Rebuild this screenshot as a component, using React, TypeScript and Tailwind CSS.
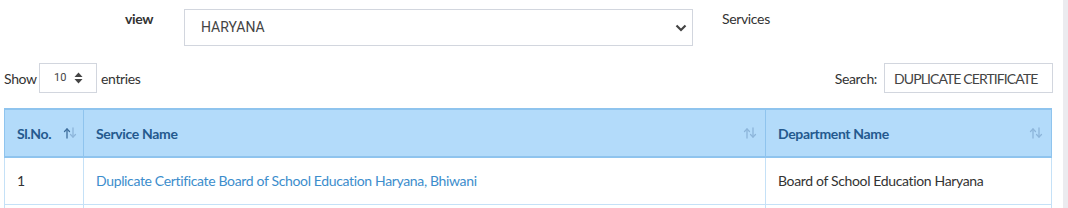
import React from "react";

function SortIcon({ active = false }: { active?: boolean }) {
  return (
    <svg width="14" height="12" viewBox="0 0 14 12" fill="none" strokeWidth="1.3" strokeLinecap="round" strokeLinejoin="round">
      <g stroke={active ? "#3d6d9c" : "#8db5da"}>
        <path d="M4 11V2" />
        <path d="M1.5 4.5L4 2l2.5 2.5" />
      </g>
      <g stroke="#8db5da">
        <path d="M10 1v9" />
        <path d="M7.5 7.5L10 10l2.5-2.5" />
      </g>
    </svg>
  );
}

export default function App() {
  return (
    <div
      className="flex w-[1068px] h-[208px] overflow-hidden bg-white text-[#333] text-[14px] tracking-[-0.35px]"
      style={{ fontFamily: "Lato, 'Noto Sans', sans-serif" }}
    >
      <div className="flex-1 flex flex-col">
        <div className="flex items-start pt-[9px]">
          <div className="w-[184px] pl-[125px] font-bold text-[14px] leading-[20px]">view</div>
          <div className="w-[509px] h-[37px] border border-[#d2d6de] flex items-center justify-between pl-[16px] pr-[4px]">
            <span className="text-[14px] text-[#444] tracking-normal" style={{ fontFamily: "Roboto, sans-serif" }}>HARYANA</span>
            <svg width="12" height="8" viewBox="0 0 12 8" className="mr-[1px]">
              <path d="M1.5 1.5L6 6l4.5-4.5" stroke="#444" strokeWidth="2.2" fill="none" />
            </svg>
          </div>
          <div className="pl-[29px] text-[14px] leading-[20px]">Services</div>
        </div>
        <div className="flex items-center justify-between mt-[17px] pl-[4px] pr-[10px]">
          <div className="flex items-center">
            <span className="w-[35px]">Show</span>
            <div className="w-[58px] h-[30px] border border-[#d2d6de] flex items-center pl-[14px] pr-[13px] justify-between">
              <span className="text-[11px] text-[#444] tracking-normal" style={{ fontFamily: "Roboto, sans-serif" }}>10</span>
              <svg width="9" height="12" viewBox="0 0 9 12">
                <path d="M4.5 0.5L8.5 5H0.5z" fill="#444" />
                <path d="M4.5 11.5L8.5 7H0.5z" fill="#444" />
              </svg>
            </div>
            <span className="ml-[4px]">entries</span>
          </div>
          <div className="flex items-center">
            <span>Search:</span>
            <div className="ml-[7px] w-[169px] h-[30px] border border-[#d2d6de] flex items-center pl-[9px] text-[#444] whitespace-nowrap overflow-hidden tracking-[-0.9px]">
              DUPLICATE CERTIFICATE
            </div>
          </div>
        </div>
        <div className="mt-[15px] ml-[4px] w-[1047px]">
          <table className="w-full border-collapse table-fixed">
            <colgroup>
              <col className="w-[79px]" />
              <col className="w-[682px]" />
              <col className="w-[286px]" />
            </colgroup>
            <thead>
              <tr className="bg-[#b3dbfa] h-[48px] border-t-2 border-b-2 border-[#8fc4ee]">
                <th className="border-l border-r border-[#8fc4ee] text-left font-bold text-[#24598e] pl-[12px] pr-[6px]">
                  <div className="flex items-center justify-between">
                    <span>Sl.No.</span>
                    <SortIcon active />
                  </div>
                </th>
                <th className="border-r border-[#8fc4ee] text-left font-bold text-[#24598e] pl-[12px] pr-[8px]">
                  <div className="flex items-center justify-between">
                    <span>Service Name</span>
                    <SortIcon />
                  </div>
                </th>
                <th className="border-r border-[#8fc4ee] text-left font-bold text-[#24598e] pl-[12px] pr-[8px]">
                  <div className="flex items-center justify-between">
                    <span>Department Name</span>
                    <SortIcon />
                  </div>
                </th>
              </tr>
            </thead>
            <tbody>
              <tr className="h-[47px] border-b border-[#c5e1f7]">
                <td className="border-l border-r border-[#c5e1f7] pl-[12px]">1</td>
                <td className="border-r border-[#c5e1f7] pl-[12px] text-[#3c8dcc]">
                  Duplicate Certificate Board of School Education Haryana, Bhiwani
                </td>
                <td className="border-r border-[#c5e1f7] pl-[12px]">Board of School Education Haryana</td>
              </tr>
              <tr className="h-[10px]">
                <td className="border-l border-r border-[#c5e1f7]"></td>
                <td className="border-r border-[#c5e1f7]"></td>
                <td className="border-r border-[#c5e1f7]"></td>
              </tr>
            </tbody>
          </table>
        </div>
      </div>
      <div className="w-[5px] bg-[#ebebef]" />
    </div>
  );
}
